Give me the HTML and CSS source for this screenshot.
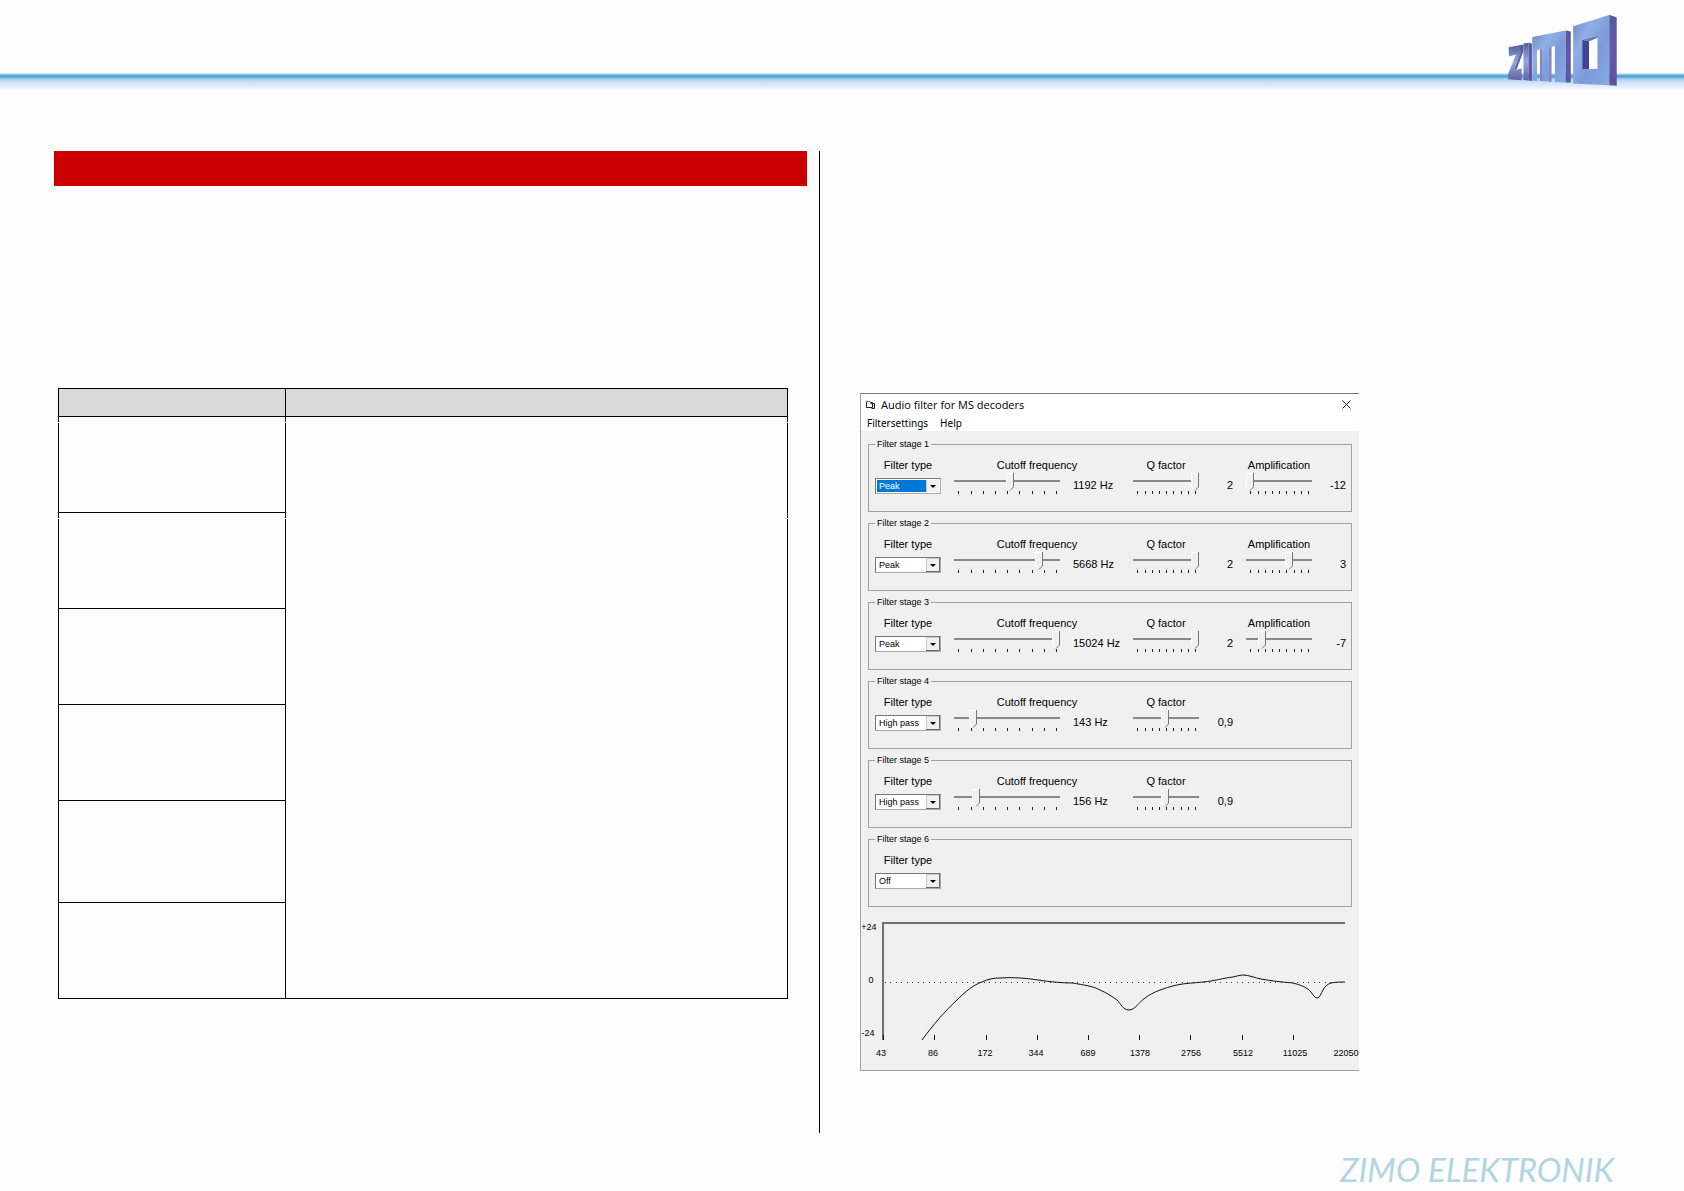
FILE: index.html
```html
<!DOCTYPE html>
<html lang="en">
  <head>
    <meta charset="utf-8" />
    <title>ZIMO Elektronik - Audio filter</title>
    <link rel="stylesheet" href="styles.css">
  </head>
  <body>
    <!-- shared tick marks for the sliders -->
    <svg class="defs" aria-hidden="true">
      <symbol id="ticks-wide" viewBox="0 0 106 3">
        <path d="M4 0h1v3h-1zM17 0h1v3h-1zM29 0h1v3h-1zM41 0h1v3h-1zM53 0h1v3h-1zM65 0h1v3h-1zM78 0h1v3h-1zM90 0h1v3h-1zM102 0h1v3h-1z" />
      </symbol>
      <symbol id="ticks-narrow" viewBox="0 0 66 3">
        <path d="M4 0h1v3h-1zM12 0h1v3h-1zM19 0h1v3h-1zM26 0h1v3h-1zM33 0h1v3h-1zM40 0h1v3h-1zM48 0h1v3h-1zM55 0h1v3h-1zM62 0h1v3h-1z" />
      </symbol>
    </svg>

    <header class="page-header">
      <svg class="logo" viewBox="80 40 333 219" role="img" aria-label="ZIMO">
        <defs>
          <linearGradient id="face" x1="0" y1="0" x2="1" y2="1">
            <stop offset="0" stop-color="#6c84c0" />
            <stop offset="0.3" stop-color="#8fb0e4" />
            <stop offset="0.6" stop-color="#7b9bd9" />
            <stop offset="1" stop-color="#86aae6" />
          </linearGradient>
          <linearGradient id="face-dark" x1="0" y1="0" x2="0" y2="1">
            <stop offset="0" stop-color="#4f5f9c" />
            <stop offset="0.5" stop-color="#93aadb" />
            <stop offset="1" stop-color="#6460a4" />
          </linearGradient>
          <linearGradient id="side" x1="0" y1="0" x2="0" y2="1">
            <stop offset="0" stop-color="#55599a" />
            <stop offset="0.5" stop-color="#6458ac" />
            <stop offset="1" stop-color="#5f5499" />
          </linearGradient>
        </defs>
        <path fill="url(#face-dark)" d="M87 141L127 134V154L104 208L126 204V239L86 236L85 221L109 163L88 169Z" />
        <path fill="url(#side)" d="M119 136L131 133V153L111 206L104 208L124 156Z" />
        <path fill="url(#face-dark)" d="M131 130L146 128V240L131 238Z" />
        <path fill="url(#side)" d="M146 128L156 130V241L146 240Z" />
        <path fill="url(#face)" d="M157 111L256 92V246L224 244V138L206 142V243L186 241V147L171 150V241L157 240Z" />
        <path fill="#8284bc" d="M180 148L186 147V241L180 241ZM206 142L214 140V244L206 243Z" />
        <path fill="url(#side)" d="M256 92L271 95V246L256 246Z" />
        <path fill="url(#face)" fill-rule="evenodd" d="M278 79L385 46V254L278 249ZM305 119V207L350 205V107Z" />
        <path fill="#41439a" d="M305 119L325 124V206L305 207Z" />
        <path fill="#6279bd" d="M305 119L350 107V113L325 124Z" />
        <path fill="url(#side)" d="M385 45L407 53V255L385 254Z" />
      </svg>
    </header>

    <main class="content">
      <section class="left-column">
        <div class="title-bar"></div>
        <table class="settings-table">
          <thead>
            <tr>
              <th></th>
              <th></th>
            </tr>
          </thead>
          <tbody>
            <tr class="broken">
              <td></td>
              <td class="merged" rowspan="6"></td>
            </tr>
            <tr class="broken"><td></td></tr>
            <tr><td></td></tr>
            <tr><td></td></tr>
            <tr class="tall"><td></td></tr>
            <tr><td></td></tr>
          </tbody>
        </table>
      </section>

      <section class="right-column">
        <div class="window">
          <div class="window-title">
            <svg width="11" height="9" viewBox="0 0 11 9" aria-hidden="true">
              <path fill="#fff" stroke="#222" d="M1.500 7.500V1.500H4.500L5.500 2.500H7.500V7.500ZM5.500 3.500H9.500V8.500H6.500" />
              <path stroke="#1d7f7f" d="M1 1.500H5" />
            </svg>
            <span>Audio filter for MS decoders</span>
            <button class="close" type="button" aria-label="Close">
              <svg width="9" height="9" viewBox="0 0 9 9"><path stroke="#222" d="M0.500 0.500L8.500 8.500M8.500 0.500L0.500 8.500" /></svg>
            </button>
          </div>
          <nav class="menu">
            <button type="button">Filtersettings</button>
            <button type="button">Help</button>
          </nav>

          <form class="stages">
            <fieldset>
              <legend>Filter stage 1</legend>
              <div class="field type">
                <label for="type1">Filter type</label>
                <select id="type1" class="active"><option>Peak</option></select>
              </div>
              <div class="field cutoff">
                <label for="cutoff1">Cutoff frequency</label>
                <div class="slider">
                  <input type="range" id="cutoff1" min="0" max="100" value="53" />
                  <svg class="ticks"><use href="#ticks-wide" /></svg>
                </div>
                <output for="cutoff1">1192 Hz</output>
              </div>
              <div class="field">
                <label for="q1">Q factor</label>
                <div class="slider">
                  <input type="range" id="q1" min="0" max="100" value="100" />
                  <svg class="ticks"><use href="#ticks-narrow" /></svg>
                </div>
                <output for="q1">2</output>
              </div>
              <div class="field">
                <label for="amp1">Amplification</label>
                <div class="slider">
                  <input type="range" id="amp1" min="-12" max="12" value="-12" />
                  <svg class="ticks"><use href="#ticks-narrow" /></svg>
                </div>
                <output for="amp1">-12</output>
              </div>
            </fieldset>

            <fieldset>
              <legend>Filter stage 2</legend>
              <div class="field type">
                <label for="type2">Filter type</label>
                <select id="type2"><option>Peak</option></select>
              </div>
              <div class="field cutoff">
                <label for="cutoff2">Cutoff frequency</label>
                <div class="slider">
                  <input type="range" id="cutoff2" min="0" max="100" value="83" />
                  <svg class="ticks"><use href="#ticks-wide" /></svg>
                </div>
                <output for="cutoff2">5668 Hz</output>
              </div>
              <div class="field">
                <label for="q2">Q factor</label>
                <div class="slider">
                  <input type="range" id="q2" min="0" max="100" value="100" />
                  <svg class="ticks"><use href="#ticks-narrow" /></svg>
                </div>
                <output for="q2">2</output>
              </div>
              <div class="field">
                <label for="amp2">Amplification</label>
                <div class="slider">
                  <input type="range" id="amp2" min="-12" max="12" value="4" />
                  <svg class="ticks"><use href="#ticks-narrow" /></svg>
                </div>
                <output for="amp2">3</output>
              </div>
            </fieldset>

            <fieldset>
              <legend>Filter stage 3</legend>
              <div class="field type">
                <label for="type3">Filter type</label>
                <select id="type3"><option>Peak</option></select>
              </div>
              <div class="field cutoff">
                <label for="cutoff3">Cutoff frequency</label>
                <div class="slider">
                  <input type="range" id="cutoff3" min="0" max="100" value="100" />
                  <svg class="ticks"><use href="#ticks-wide" /></svg>
                </div>
                <output for="cutoff3">15024 Hz</output>
              </div>
              <div class="field">
                <label for="q3">Q factor</label>
                <div class="slider">
                  <input type="range" id="q3" min="0" max="100" value="100" />
                  <svg class="ticks"><use href="#ticks-narrow" /></svg>
                </div>
                <output for="q3">2</output>
              </div>
              <div class="field">
                <label for="amp3">Amplification</label>
                <div class="slider">
                  <input type="range" id="amp3" min="-12" max="12" value="-7" />
                  <svg class="ticks"><use href="#ticks-narrow" /></svg>
                </div>
                <output for="amp3">-7</output>
              </div>
            </fieldset>

            <fieldset>
              <legend>Filter stage 4</legend>
              <div class="field type">
                <label for="type4">Filter type</label>
                <select id="type4"><option>High pass</option></select>
              </div>
              <div class="field cutoff">
                <label for="cutoff4">Cutoff frequency</label>
                <div class="slider">
                  <input type="range" id="cutoff4" min="0" max="100" value="15" />
                  <svg class="ticks"><use href="#ticks-wide" /></svg>
                </div>
                <output for="cutoff4">143 Hz</output>
              </div>
              <div class="field">
                <label for="q4">Q factor</label>
                <div class="slider">
                  <input type="range" id="q4" min="0" max="100" value="49" />
                  <svg class="ticks"><use href="#ticks-narrow" /></svg>
                </div>
                <output for="q4">0,9</output>
              </div>
            </fieldset>

            <fieldset>
              <legend>Filter stage 5</legend>
              <div class="field type">
                <label for="type5">Filter type</label>
                <select id="type5"><option>High pass</option></select>
              </div>
              <div class="field cutoff">
                <label for="cutoff5">Cutoff frequency</label>
                <div class="slider">
                  <input type="range" id="cutoff5" min="0" max="100" value="18" />
                  <svg class="ticks"><use href="#ticks-wide" /></svg>
                </div>
                <output for="cutoff5">156 Hz</output>
              </div>
              <div class="field">
                <label for="q5">Q factor</label>
                <div class="slider">
                  <input type="range" id="q5" min="0" max="100" value="49" />
                  <svg class="ticks"><use href="#ticks-narrow" /></svg>
                </div>
                <output for="q5">0,9</output>
              </div>
            </fieldset>

            <fieldset>
              <legend>Filter stage 6</legend>
              <div class="field type">
                <label for="type6">Filter type</label>
                <select id="type6"><option>Off</option></select>
              </div>
            </fieldset>
          </form>

          <!-- frequency response -->
          <svg class="chart" viewBox="0 0 498 157">
            <path class="axis" d="M22 127V10H484" />
            <path class="zero" d="M24 69.500H484" />
            <path class="mark" d="M22.500 122v5M73.500 122v5M125.500 122v5M176.500 122v5M227.500 122v5M278.500 122v5M329.500 122v5M381.500 122v5M432.500 122v5" />
            <path class="curve" d="M61 127C72 112 84 98 96 87C104 79 112 72 121 69C127 66 133 65 139 65C150 64 165 65 177 67C190 69 202 70 212 70C222 72 232 73 239 77C244 79 252 84 256 87C260 91 262 97 268 97C274 97 278 89 284 85C292 79 303 75 316 72C325 70 334 70 342 69C354 68 362 65 372 64C376 63 380 62 382 62C388 62 394 65 400 66C410 68 421 69 432 70C440 72 447 75 450 79C452 82 454 85 456 85C459 85 460 80 462 77C464 73 467 71 470 70C475 69 480 69 484 69" />
            <g class="numbers">
              <text x="8" y="17">+24</text>
              <text x="10" y="70">0</text>
              <text x="7" y="123">-24</text>
              <text x="20" y="143">43</text>
              <text x="72" y="143">86</text>
              <text x="124" y="143">172</text>
              <text x="175" y="143">344</text>
              <text x="227" y="143">689</text>
              <text x="279" y="143">1378</text>
              <text x="330" y="143">2756</text>
              <text x="382" y="143">5512</text>
              <text x="434" y="143">11025</text>
              <text x="485" y="143">22050</text>
            </g>
          </svg>
        </div>
      </section>
    </main>

    <footer class="page-footer">ZIMO ELEKTRONIK</footer>
  </body>
</html>
```
FILE: styles.css
```css
* {
  box-sizing: border-box;
}

body {
  margin: 0;
  min-height: 100vh;
  display: flex;
  flex-direction: column;
  background-color: #fdfdfd;
  color: #000;
  font-family: "Liberation Sans", Arial, sans-serif;
  font-size: 11px;
}

button {
  padding: 0;
  border: none;
  background: none;
  font: inherit;
  color: inherit;
}

svg {
  display: block;
  fill: none;
}

.defs {
  display: none;
}

/* header */
.page-header {
  display: flex;
  justify-content: flex-end;
  height: 91px;
  padding: 13px 65px 0 0;
  background: linear-gradient(#fdfdfd 73px, #a5d3f0 74px, #4a9fd6 76px, #58a8dc 77px, #a9d0f0 79px, #c9e0f6 82px, #fdfdfd 91px);
}

.logo {
  width: 113px;
  height: 74px;
}

/* columns */
.content {
  display: grid;
  grid-template-columns: 766fr 810fr;
  padding: 60px 54px 0;
}

.left-column {
  min-height: 982px;
  padding-right: 12px;
  border-right: 1px solid #000;
}

.title-bar {
  height: 35px;
  background-color: #c00;
}

.settings-table {
  width: calc(100% - 23px);
  margin: 202px 0 0 4px;
  border-collapse: collapse;
  table-layout: fixed;
}

th,
td {
  position: relative;
  padding: 0;
  border: 1px solid #000;
}

th {
  height: 28px;
  background-color: #d9d9d9;
}

th:first-child {
  width: 31.2%;
}

td {
  height: 96px;
}

.tall td {
  height: 102px;
}

/* breaks in the vertical rules */
.broken td::before,
.merged::after {
  content: "";
  position: absolute;
  top: 5px;
  left: -1px;
  right: -1px;
  height: 1px;
  background-color: #fdfdfd;
}

.broken .merged::after {
  top: 101px;
}

/* filter window */
.right-column {
  padding: 242px 0 0 40px;
}

.window {
  width: 499px;
  border: solid #a0a0a0;
  border-width: 1px 0 1px 1px;
  border-top-color: #777;
  background-color: #f0f0f0;
}

.window-title,
.menu {
  display: flex;
  align-items: center;
  background-color: #fff;
  font-family: "Noto Sans", "Open Sans", sans-serif;
  font-size: 10px;
}

.window-title {
  gap: 5px;
  height: 21px;
  padding: 0 8px 0 4px;
  font-family: "Open Sans", "Noto Sans", sans-serif;
  font-size: 11px;
}

.close {
  margin-left: auto;
}

.menu {
  gap: 12px;
  height: 16px;
  padding: 0 6px;
}

.stages {
  display: flex;
  flex-direction: column;
  gap: 5px;
  padding: 7px 7px 6px;
}

fieldset {
  display: grid;
  grid-template-columns: 66px 166px 100px 100px;
  gap: 13px;
  height: 74px;
  min-width: 0;
  margin: 0;
  padding: 8px 5px 0 6px;
  border: 1px solid #a0a0a0;
}

legend {
  height: 12px;
  padding: 0 2px;
  font-size: 9px;
  line-height: 12px;
}

.field {
  display: grid;
  grid-template-columns: 66px 1fr;
  grid-template-rows: 14px 23px;
}

.field label {
  grid-column: 1 / -1;
  width: 66px;
  line-height: 14px;
  text-align: center;
  white-space: nowrap;
}

.field output {
  padding-top: 6px;
  line-height: 14px;
  text-align: right;
}

.cutoff {
  grid-template-columns: 106px 1fr;
}

.cutoff label {
  width: auto;
}

.cutoff output {
  padding-left: 13px;
  text-align: left;
  white-space: nowrap;
}

select {
  appearance: none;
  width: 66px;
  height: 16px;
  margin-top: 6px;
  padding: 0 3px;
  border: 1px solid #777;
  border-right-color: #aaa;
  border-bottom-color: #aaa;
  border-radius: 0;
  background: #fff url("data:image/svg+xml,%3Csvg xmlns='http://www.w3.org/2000/svg' width='14' height='14'%3E%3Cpath fill='%23f0f0f0' d='M0 0h14v14H0z'/%3E%3Cpath fill='none' stroke='%23666' d='M0 13.500h13.500V0'/%3E%3Cpath fill='none' stroke='%23ccc' d='M.5 13V.5H13'/%3E%3Cpath d='M4 6h6L7 9z'/%3E%3C/svg%3E") right top no-repeat;
  color: #000;
  font-family: inherit;
  font-size: 9px;
}

select.active {
  background-color: #0078d7;
  color: #fff;
  box-shadow: inset 0 0 0 1px #fff;
}

.slider {
  padding-top: 1px;
}

input[type="range"] {
  appearance: none;
  display: block;
  width: 100%;
  height: 18px;
  margin: 0;
  background: linear-gradient(#888, #888) 0 7px / 100% 2px no-repeat;
}

input[type="range"]::-webkit-slider-thumb {
  appearance: none;
  width: 8px;
  height: 18px;
  background: url("data:image/svg+xml,%3Csvg xmlns='http://www.w3.org/2000/svg' width='8' height='18'%3E%3Cpath fill='%23f0f0f0' d='M0 0h8v14l-4 4-4-4z'/%3E%3Cpath fill='none' stroke='%23fff' d='M4 17.500L.5 14V.5H7'/%3E%3Cpath fill='none' stroke='%23777' d='M7.500 0v14L4 17.500'/%3E%3C/svg%3E");
}

.ticks {
  width: 100%;
  height: 3px;
  fill: #222;
  shape-rendering: crispEdges;
}

/* chart */
.chart {
  width: 100%;
}

.axis {
  stroke: #707070;
  stroke-width: 2;
}

.zero {
  stroke: #333;
  stroke-dasharray: 1 4 1 5;
}

.mark,
.curve {
  stroke: #111;
}

.numbers {
  fill: #000;
  font-size: 9px;
  text-anchor: middle;
}

/* footer */
.page-footer {
  margin-top: auto;
  padding: 0 70px 3px 0;
  color: #b0d5e3;
  font-family: Lato, "Open Sans", sans-serif;
  font-size: 33px;
  font-style: italic;
  line-height: 38px;
  text-align: right;
}
```
